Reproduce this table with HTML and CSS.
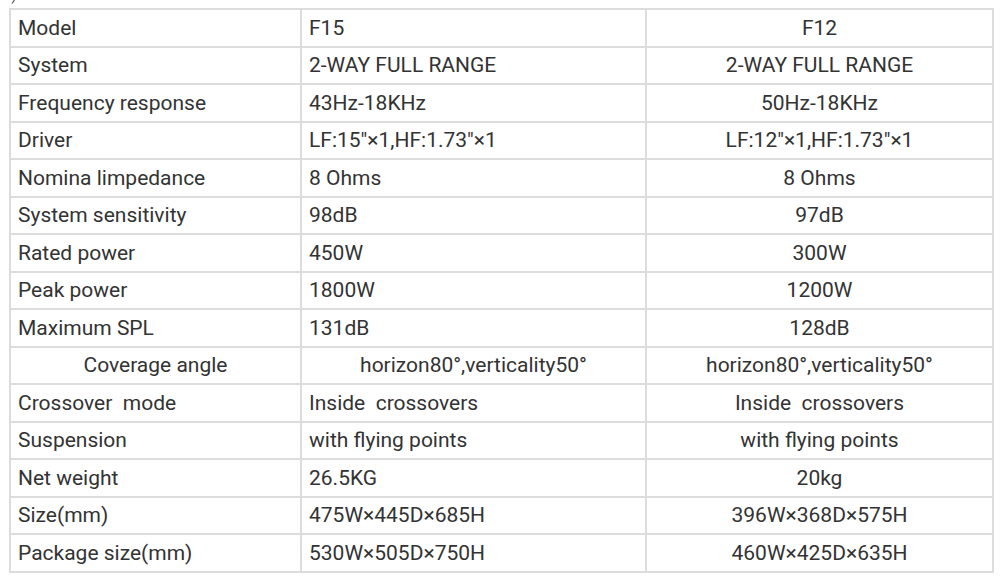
FILE: index.html
```html
<!DOCTYPE html>
<html>
<head>
<meta charset="utf-8">
<link rel="stylesheet" href="styles.css">
</head>
<body>
<div class="page">
<svg class="cut" width="6" height="4" viewBox="0 0 6 4"><path d="M4.5 0 L2 3.5" stroke="#555" stroke-width="1.2" fill="none"/></svg>
<table class="spec">
<colgroup><col class="c1"><col class="c2"><col class="c3"></colgroup>
<tbody>
<tr><td>Model</td><td>F15</td><td class="mid">F12</td></tr>
<tr><td>System</td><td>2-WAY FULL RANGE</td><td class="mid">2-WAY FULL RANGE</td></tr>
<tr><td>Frequency response</td><td>43Hz-18KHz</td><td class="mid">50Hz-18KHz</td></tr>
<tr><td>Driver</td><td>LF:15"×1,HF:1.73"×1</td><td class="mid">LF:12"×1,HF:1.73"×1</td></tr>
<tr><td>Nomina limpedance</td><td>8 Ohms</td><td class="mid">8 Ohms</td></tr>
<tr><td>System sensitivity</td><td>98dB</td><td class="mid">97dB</td></tr>
<tr><td>Rated power</td><td>450W</td><td class="mid">300W</td></tr>
<tr><td>Peak power</td><td>1800W</td><td class="mid">1200W</td></tr>
<tr><td>Maximum SPL</td><td>131dB</td><td class="mid">128dB</td></tr>
<tr><td class="mid">Coverage angle</td><td class="mid">horizon80°,verticality50°</td><td class="mid">horizon80°,verticality50°</td></tr>
<tr><td>Crossover&nbsp; mode</td><td>Inside&nbsp; crossovers</td><td class="mid">Inside&nbsp; crossovers</td></tr>
<tr><td>Suspension</td><td>with flying points</td><td class="mid">with flying points</td></tr>
<tr><td>Net weight</td><td>26.5KG</td><td class="mid">20kg</td></tr>
<tr><td>Size(mm)</td><td>475W×445D×685H</td><td class="mid">396W×368D×575H</td></tr>
<tr><td>Package size(mm)</td><td>530W×505D×750H</td><td class="mid">460W×425D×635H</td></tr>
</tbody>
</table>
</div>
</body>
</html>
```
FILE: styles.css
```css
html, body {
  margin: 0;
  padding: 0;
  background: #fff;
}
.page {
  position: relative;
  padding: 8px 0 0 9px;
  font-family: Roboto, "Liberation Sans", sans-serif;
  color: #333;
}
.cut {
  position: absolute;
  top: 0;
  left: 10px;
}
.spec {
  border-collapse: collapse;
  width: 983px;
  table-layout: fixed;
  font-size: 21px;
}
.c1 { width: 291px; }
.c2 { width: 345px; }
.c3 { width: 347px; }
.spec td {
  border: 2px solid #dcdcdc;
  height: 37.5px;
  box-sizing: border-box;
  padding: 0 7px;
  text-align: left;
  vertical-align: middle;
  white-space: nowrap;
  line-height: 22px;
}
.spec td.mid {
  text-align: center;
}
```
